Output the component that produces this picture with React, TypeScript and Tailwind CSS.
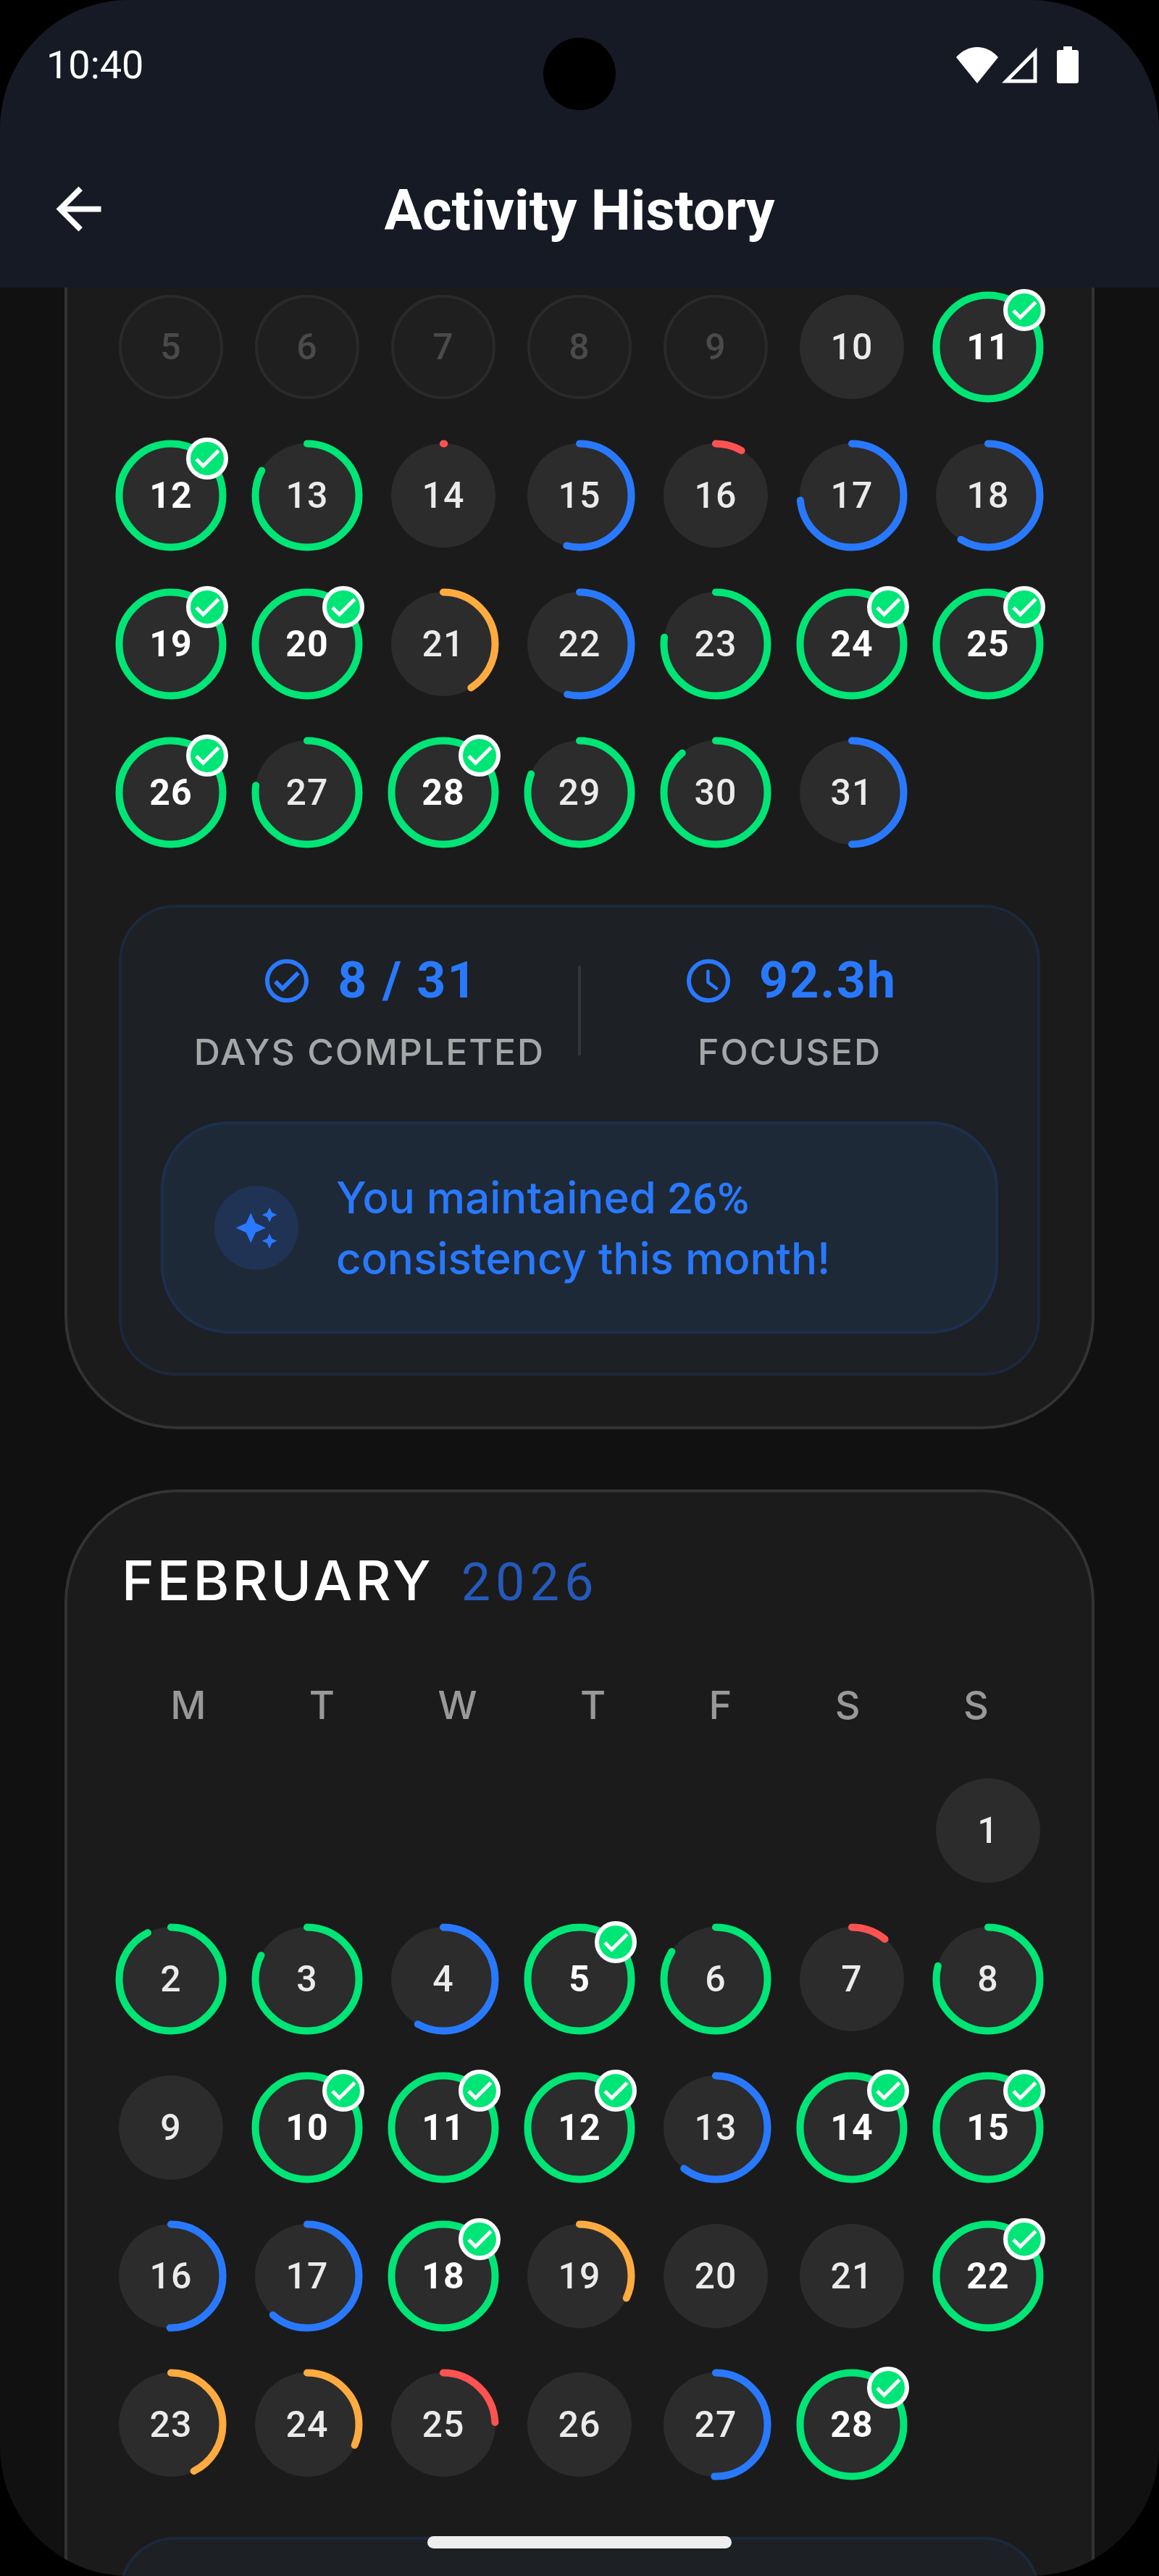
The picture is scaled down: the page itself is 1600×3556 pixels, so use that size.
import { ReactNode } from 'react';

type Day = { day: number; progress?: number; disabled?: boolean };

const off = (day: number): Day => ({ day, disabled: true });
const d = (day: number, progress = 0): Day => ({ day, progress });

const january: Day[] = [
  off(5), off(6), off(7), off(8), off(9), d(10), d(11, 100),
  d(12, 100), d(13, 83), d(14, 0.3), d(15, 54), d(16, 8.3), d(17, 73.5), d(18, 58.8),
  d(19, 100), d(20, 100), d(21, 41), d(22, 53.8), d(23, 77.1), d(24, 100), d(25, 100),
  d(26, 100), d(27, 77.2), d(28, 100), d(29, 80.8), d(30, 88.8), d(31, 50),
];

const february: Day[] = [
  d(1),
  d(2, 92.6), d(3, 82.6), d(4, 58.2), d(5, 100), d(6, 83.9), d(7, 11), d(8, 79.1),
  d(9), d(10, 100), d(11, 100), d(12, 100), d(13, 60.5), d(14, 100), d(15, 100),
  d(16, 50.3), d(17, 61.5), d(18, 100), d(19, 32), d(20), d(21), d(22, 100),
  d(23, 42.7), d(24, 31.5), d(25, 24.3), d(26), d(27, 50.4), d(28, 100),
];

const weekdays = ['M', 'T', 'W', 'T', 'F', 'S', 'S'];

function ringColor(progress: number) {
  if (progress >= 75) return '#00e676';
  if (progress >= 50) return '#2979ff';
  if (progress >= 25) return '#ffab40';
  return '#ff5252';
}

function DayCell({ day, progress = 0, disabled }: Day) {
  if (disabled) {
    return (
      <div className="flex aspect-square items-center justify-center rounded-full border-4 border-[#2a2a2a] bg-[#1f1f1f] text-[#4a4a4a]">
        {day}
      </div>
    );
  }

  const done = progress >= 100;

  return (
    <div className={`relative flex aspect-square items-center justify-center rounded-full bg-[#2c2c2c] ${done ? 'font-bold text-white' : 'text-[#ebebeb]'}`}>
      {progress > 0 && (
        <svg viewBox="0 0 144 144" className="absolute inset-0 size-full -rotate-90 overflow-visible" fill="none">
          <circle
            cx="72"
            cy="72"
            r="71.5"
            pathLength={100}
            stroke={ringColor(progress)}
            strokeWidth="10"
            strokeLinecap="round"
            strokeDasharray={done ? undefined : `${progress} 100`}
          />
        </svg>
      )}
      <span>{day}</span>
      {done && (
        <div className="absolute -top-2 -right-[7px] flex size-[58px] items-center justify-center rounded-full border-6 border-white bg-[#00e676]">
          <svg viewBox="0 0 24 24" className="size-[44px] shrink-0 text-white" fill="currentColor" stroke="currentColor">
            <path d="M9 16.17L4.83 12l-1.42 1.41L9 19 21 7l-1.41-1.41z" strokeWidth="0.8" />
          </svg>
        </div>
      )}
    </div>
  );
}

function DayGrid({ days, offset = 0 }: { days: Day[]; offset?: number }) {
  return (
    <div className="grid grid-cols-7 gap-x-[44px] gap-y-[61px] text-[50px] leading-[62px] font-medium tracking-[1px]">
      {Array.from({ length: offset }, (_, i) => (
        <div key={`empty-${i}`} />
      ))}
      {days.map((item) => (
        <DayCell key={item.day} {...item} />
      ))}
    </div>
  );
}

function Stat({ icon, value, label }: { icon: ReactNode; value: string; label: string }) {
  return (
    <div className="flex flex-1 flex-col items-center">
      <div className="flex h-[93px] items-center gap-[34px] text-[70px] font-bold tracking-[2px] text-[#2979ff]">
        {icon}
        <span>{value}</span>
      </div>
      <div className="mt-[22px] font-['Inter',sans-serif] text-[50px] leading-[61px] font-medium tracking-[2px] text-[#a4a6a8]">{label}</div>
    </div>
  );
}

function Summary() {
  return (
    <div className="mt-[83px] rounded-[78px] border-4 border-[#1c283b] bg-[#1d2024] p-[54px]">
      <div className="flex items-center">
        <Stat
          value="8 / 31"
          label="DAYS COMPLETED"
          icon={
            <svg viewBox="0 0 24 24" className="size-[72px]" fill="currentColor">
              <path d="M12 2C6.48 2 2 6.48 2 12s4.48 10 10 10 10-4.48 10-10S17.52 2 12 2zm0 18c-4.41 0-8-3.59-8-8s3.59-8 8-8 8 3.59 8 8-3.59 8-8 8zm4.59-12.42L10 14.17l-2.59-2.58L6 13l4 4 8-8z" />
            </svg>
          }
        />
        <div className="h-[124px] w-1 bg-[#333639]" />
        <Stat
          value="92.3h"
          label="FOCUSED"
          icon={
            <svg viewBox="0 0 24 24" className="size-[72px]" fill="none" stroke="currentColor">
              <circle cx="12" cy="12" r="9" strokeWidth="2" />
              <path d="M11.8 7.6v5l3.9 2.9" strokeWidth="1.5" strokeLinecap="round" />
            </svg>
          }
        />
      </div>

      <div className="mt-[65px] flex h-[293px] items-center gap-[52px] rounded-[93px] border-4 border-[#1d2f4f] bg-[#1e2937] px-[70px]">
        <div className="flex size-[116px] shrink-0 items-center justify-center rounded-full bg-[#203354] text-[#2979ff]">
          <svg viewBox="0 0 24 24" className="size-[62px]" fill="currentColor">
            <path d="M19 9l1.25-2.75L23 5l-2.75-1.25L19 1l-1.25 2.75L15 5l2.75 1.25L19 9zm-7.5.5L9 4 6.5 9.5 1 12l5.5 2.5L9 20l2.5-5.5L17 12l-5.5-2.5zM19 15l-1.25 2.75L15 19l2.75 1.25L19 23l1.25-2.75L23 19l-2.75-1.25L19 15z" />
          </svg>
        </div>
        <p className="font-['Inter',sans-serif] text-[60px] leading-[82px] font-medium text-[#2979ff]">
          You maintained <span className="font-['Roboto',sans-serif]">26%</span>
          <br />
          consistency this month!
        </p>
      </div>
    </div>
  );
}

function StatusBar() {
  return (
    <div className="relative flex h-[179px] items-center justify-between pr-[111px] pl-[64px] text-white">
      <span className="text-[54px]">10:40</span>
      <div className="absolute top-[52px] left-1/2 size-[100px] -translate-x-1/2 rounded-full bg-black" />
      <div className="flex items-center">
        <svg viewBox="0 0 58 50" className="h-[50px] w-[58px]" fill="currentColor">
          <path d="M29 50L0 14C8 5 18 0 29 0s21 5 29 14z" />
        </svg>
        <svg viewBox="0 0 49 50" className="ml-[5px] h-[50px] w-[49px]" fill="none" stroke="currentColor">
          <path d="M46 6.5V47H6z" strokeWidth="5" />
        </svg>
        <svg viewBox="0 0 30 51" className="ml-[27px] h-[51px] w-[30px]" fill="currentColor">
          <path d="M9 0h12v5h6a3 3 0 0 1 3 3v40a3 3 0 0 1-3 3H3a3 3 0 0 1-3-3V8a3 3 0 0 1 3-3h6z" />
        </svg>
      </div>
    </div>
  );
}

export default function App() {
  return (
    <div className="h-screen bg-black font-['Roboto',sans-serif]">
      <div className="relative flex h-full flex-col overflow-hidden rounded-[178px] bg-[#111111]">
        <header className="shrink-0 bg-[#161a25]">
          <StatusBar />
          <div className="grid h-[218px] grid-cols-[1fr_auto_1fr] items-center px-[62px] text-white">
            <button type="button" aria-label="Back" className="size-[93px]">
              <svg viewBox="0 0 24 24" className="size-full" fill="currentColor">
                <path d="M20 11H7.83l5.59-5.59L12 4l-8 8 8 8 1.41-1.41L7.83 13H20v-2z" />
              </svg>
            </button>
            <h1 className="pt-1 text-[78px] font-bold">Activity History</h1>
          </div>
        </header>

        <main className="min-h-0 flex-1 overflow-hidden px-[89px]">
          {/* January, scrolled under the header */}
          <section className="rounded-b-[156px] border-4 border-t-0 border-[#333333] bg-[#1b1b1b] px-[71px] pt-[10px] pb-[70px]">
            <DayGrid days={january} />
            <Summary />
          </section>

          <section className="mt-[83px] rounded-t-[156px] border-4 border-b-0 border-[#333333] bg-[#1b1b1b] px-[71px] pt-[70px]">
            <h2 className="flex h-[104px] items-baseline gap-[38px] pl-1 font-['Inter',sans-serif] leading-[102px]">
              <span className="text-[76px] font-medium tracking-[4px] text-white">FEBRUARY</span>
              <span className="font-['Roboto',sans-serif] text-[72px] tracking-[7px] text-[#245aba]">2026</span>
            </h2>
            <div className="mt-[85px] mb-[66px] flex justify-around font-['Inter',sans-serif] text-[54px] leading-[70px] font-medium text-[#999999]">
              {weekdays.map((name, i) => (
                <span key={i}>{name}</span>
              ))}
            </div>
            <DayGrid days={february} offset={6} />
            <div className="mt-[83px] h-[200px] rounded-t-[78px] border-4 border-b-0 border-[#1c283b] bg-[#1d2024]" />
          </section>
        </main>

        {/* Home indicator */}
        <div className="absolute bottom-[38px] left-1/2 h-[17px] w-[420px] -translate-x-1/2 rounded-full bg-[#eeeeee]" />
      </div>
    </div>
  );
}
